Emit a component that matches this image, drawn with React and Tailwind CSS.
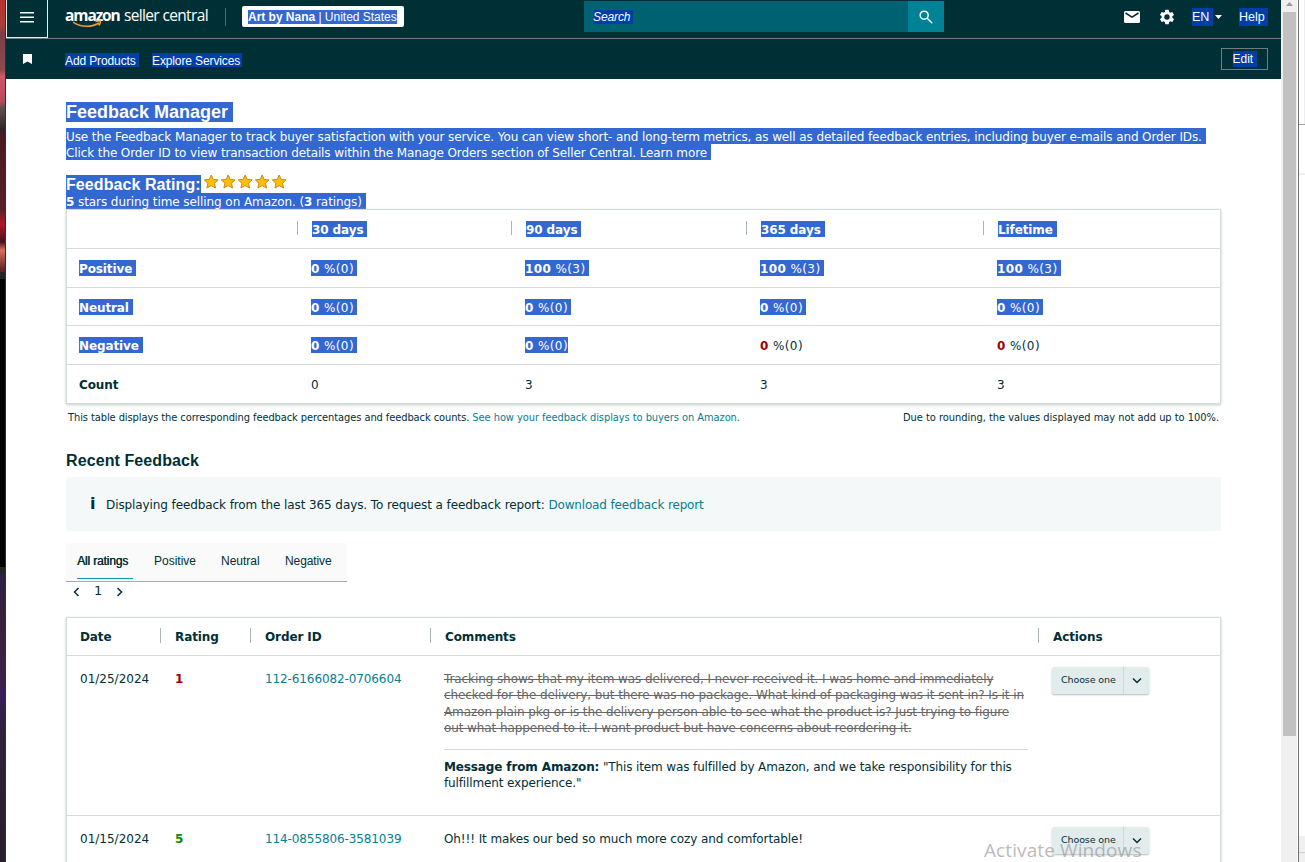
import React from "react";

const stats = [
  { label: "Positive", h: "h-[39px]", values: [[0, 0], [100, 3], [100, 3], [100, 3]], selected: 4 },
  { label: "Neutral", h: "h-[38px]", values: [[0, 0], [0, 0], [0, 0], [0, 0]], selected: 4 },
  { label: "Negative", h: "h-[39px]", values: [[0, 0], [0, 0], [0, 0], [0, 0]], selected: 2 },
];

function Mark({ children, className = "" }) {
  return (
    <span className={`inline-block h-4 bg-[#3367d1] leading-4 whitespace-nowrap text-white ${className}`}>
      {children}
    </span>
  );
}

function NavMark({ children, className = "" }) {
  return <span className={`inline-block bg-[#003eaa] whitespace-nowrap text-white ${className}`}>{children}</span>;
}

function Star() {
  return (
    <svg width="17" height="16" viewBox="0 0 17 16">
      <path
        d="M7.200 1l2 4.400 4.900.500-3.600 3.300 1 4.800-4.300-2.400L2.900 14l1-4.800L.300 5.900l4.900-.500z"
        fill="#fdc00a"
        stroke="#c98a12"
        strokeLinejoin="round"
      />
    </svg>
  );
}

function Chevron({ d, className }) {
  return (
    <svg className={className} width="10" height="10" viewBox="0 0 10 10" fill="none" stroke="#002f36" strokeWidth="1.5">
      <path d={d} />
    </svg>
  );
}

function ChooseOne() {
  return (
    <div className="flex h-[27px] w-[97px] rounded-xs bg-[#e3eced] text-[9.5px] shadow-[0_1px_2px_#b0bbbd]">
      <div className="flex w-[72px] items-center border-r border-[#cfd9da] pb-0.5 pl-[9px] whitespace-nowrap">Choose one</div>
      <div className="flex flex-1 items-center justify-center">
        <Chevron d="M1 2.500l4 4 4-4" />
      </div>
    </div>
  );
}

function TopBar() {
  return (
    <header className="bg-[#002f36] font-['Liberation_Sans',Arial,sans-serif] tracking-normal text-white">
      <div className="flex h-[39px] items-start border-b border-[#6f7d7f]">
        <div className="flex h-[38px] w-[42px] items-center justify-center border border-t-0 border-[#e8eeee] pb-[3px]">
          <svg width="14" height="12" viewBox="0 0 14 12" fill="#fff">
            <path d="M0 1h14v1.500H0zM0 5.500h14V7H0zM0 10h14v1.500H0z" />
          </svg>
        </div>
        <div className="relative ml-[17px] flex h-[29px] w-[160px] items-center font-['Open_Sans',sans-serif] text-[15.5px] whitespace-nowrap">
          <b className="w-[55px] tracking-[-1.1px]">amazon</b>
          <span className="ml-1 tracking-[-0.65px]">seller central</span>
          <svg className="absolute top-5 left-[8px]" width="30" height="8" viewBox="0 0 30 8" fill="none" stroke="#f29a2e" strokeWidth="1.5">
            <path d="M0 2C8 7.500 19 7.500 26 3M22.500 1.500c3-.700 5-.600 5 .100s-.600 2.500-1.600 4" />
          </svg>
        </div>
        <div className="mt-2 h-[18px] w-px bg-[#4d6b70]" />
        <div className="mt-[6px] ml-4 flex h-[21px] w-[162px] items-center rounded-xs bg-white pl-[6px] text-[12px]">
          <Mark className="h-[14px]! w-[149px] leading-[14px]! tracking-[-0.02px]">
            <b>Art by Nana</b> | United States
          </Mark>
        </div>
        <div className="mt-px ml-[180px] flex h-[31px] w-[360px] bg-[#006170]">
          <div className="flex-1 pt-[9px] pl-[9px] text-xs leading-[14px] italic">
            <NavMark className="w-[40px] tracking-[-0.1px]">Search</NavMark>
          </div>
          <div className="flex w-9 items-center justify-center bg-[#008296]">
            <svg width="14" height="14" viewBox="0 0 14 14" fill="none" stroke="#fff" strokeWidth="1.5">
              <circle cx="5.200" cy="5.200" r="4" />
              <path d="M8.200 8.200l5 5" />
            </svg>
          </div>
        </div>
        <svg className="mt-[11px] ml-[180px]" width="16" height="12" viewBox="0 0 16 12">
          <rect width="16" height="12" rx="1.500" fill="#fff" />
          <path d="M1.500 2L8 6.200 14.500 2" fill="none" stroke="#002f36" strokeWidth="1.500" />
        </svg>
        <svg className="mt-[8px] ml-[18px]" width="18" height="18" viewBox="0 0 24 24" fill="#fff">
          <path d="M19.140 12.940c.040-.300.060-.610.060-.940s-.020-.640-.070-.940l2.030-1.580a.49.49 0 0 0 .120-.610l-1.920-3.320a.488.488 0 0 0-.590-.220l-2.390.960a7 7 0 0 0-1.620-.940L14.400 2.810a.484.484 0 0 0-.480-.410h-3.840a.47.47 0 0 0-.470.410L9.250 5.350a7.300 7.300 0 0 0-1.620.940l-2.390-.960a.48.48 0 0 0-.590.220L2.740 8.870a.47.47 0 0 0 .120.610l2.030 1.580c-.050.300-.090.630-.090.940s.020.640.070.940l-2.030 1.580a.49.49 0 0 0-.120.610l1.920 3.320c.120.220.370.290.590.220l2.390-.960c.500.380 1.030.700 1.620.940l.360 2.540c.050.240.240.410.480.410h3.840c.240 0 .440-.170.470-.410l.360-2.540a7 7 0 0 0 1.620-.940l2.390.960c.220.080.470 0 .590-.220l1.920-3.320a.47.47 0 0 0-.120-.610zM12 15.600a3.600 3.600 0 1 1 0-7.200 3.600 3.600 0 0 1 0 7.200z" />
        </svg>
        <NavMark className="mt-2 ml-[16px] h-[18px] w-[21px] text-[12.5px] leading-[18px]">EN</NavMark>
        <svg className="mt-[15px] ml-[2px]" width="7" height="4" viewBox="0 0 7 4">
          <path d="M0 0h7L3.500 4z" fill="#fff" />
        </svg>
        <NavMark className="mt-2 ml-[17px] h-[18px] w-[29px] text-[12.5px] leading-[18px]">Help</NavMark>
      </div>
      <div className="flex h-10 text-xs">
        <svg className="mt-[15px] ml-[17px]" width="9" height="10" viewBox="0 0 9 10">
          <path d="M0 0h9v10L4.500 7.500 0 10z" fill="#fff" />
        </svg>
        <div className="mt-[14px] ml-[33px] flex gap-[13px] leading-4 tracking-[-0.12px]">
          <NavMark className="h-[14px] w-[74px]">Add Products</NavMark>
          <NavMark className="h-[14px] w-[90px]">Explore Services</NavMark>
        </div>
        <div className="mt-[9px] mr-[13px] ml-auto flex h-[22px] w-[47px] items-center justify-center border border-[#6f7d7f]">
          <NavMark className="w-6 leading-4">Edit</NavMark>
        </div>
      </div>
    </header>
  );
}

function SummaryTable() {
  return (
    <div className="w-[1155px] border border-[#d5dbdb] shadow-[0_1px_3px_#c3caca]">
      <div className="grid h-[38px] grid-cols-[230px_214px_235px_237px_1fr] items-center font-bold">
        <div />
        {["30 days", "90 days", "365 days", "Lifetime"].map((t) => (
          <div key={t} className="flex items-center">
            <i className="mb-0.5 h-[14px] w-px bg-[#aab7b8]" />
            <Mark className="ml-[14px] pr-1 leading-[18px]!">{t}</Mark>
          </div>
        ))}
      </div>
      {stats.map((row) => (
        <div
          key={row.label}
          className={`grid grid-cols-[230px_214px_235px_237px_1fr] items-center border-t border-[#d5dbdb] ${row.h}`}
        >
          <div className="flex pl-3">
            <Mark className="pr-1 font-bold leading-[18px]!">{row.label}</Mark>
          </div>
          {row.values.map(([pct, n], i) => (
            <div key={i} className="flex pl-[14px] tracking-[0.4px]">
              {i < row.selected ? (
                <Mark className={row.selected === 2 && i === 1 ? "leading-[18px]!" : "pr-[3px] leading-[18px]!"}>
                  <b>{pct}</b> %({n})
                </Mark>
              ) : (
                <span className="h-4 leading-[18px]">
                  <b className="text-[#a00000]">{pct}</b> %({n})
                </span>
              )}
            </div>
          ))}
        </div>
      ))}
      <div className="grid h-[39px] grid-cols-[230px_214px_235px_237px_1fr] items-center border-t border-[#d5dbdb] pt-0.5">
        <div className="pl-3 font-bold">Count</div>
        {[0, 3, 3, 3].map((n, i) => (
          <div key={i} className="pl-[14px]">{n}</div>
        ))}
      </div>
    </div>
  );
}

function FeedbackTable() {
  const cols = "grid grid-cols-[93px_90px_180px_608px_1fr]";
  return (
    <div className="mt-[18px] w-[1155px] border border-[#d5dbdb] shadow-[0_1px_3px_#c3caca]">
      <div className={`${cols} h-[37px] items-center font-bold`}>
        <div className="pl-[13px]">Date</div>
        {["Rating", "Order ID", "Comments", "Actions"].map((t) => (
          <div key={t} className="flex items-center">
            <i className="mb-0.5 h-[15px] w-px bg-[#aab7b8]" />
            <span className="ml-[14px]">{t}</span>
          </div>
        ))}
      </div>
      <div className={`${cols} h-[160px] border-t border-[#d5dbdb] pt-[15px]`}>
        <div className="pl-[13px] tracking-normal">01/25/2024</div>
        <div className="pl-[15px] font-bold text-[#a00000]">1</div>
        <div className="pl-[15px] text-[#077d92]">112-6166082-0706604</div>
        <div className="pr-[10px] pl-[14px]">
          <p className="border-b border-[#d5dbdb] pb-[12px] leading-[16.4px] tracking-[-0.09px] whitespace-nowrap text-[#666] line-through">
            Tracking shows that my item was delivered, I never received it. I was home and immediately
            <br />
            checked for the delivery, but there was no package. What kind of packaging was it sent in? Is it in
            <br />
            Amazon plain pkg or is the delivery person able to see what the product is? Just trying to figure
            <br />
            out what happened to it. I want product but have concerns about reordering it.
          </p>
          <p className="mt-[9px] tracking-[-0.13px] whitespace-nowrap">
            <b>Message from Amazon:</b> "This item was fulfilled by Amazon, and we take responsibility for this
            <br />
            fulfillment experience."
          </p>
        </div>
        <div className="-mt-[4px] pl-[14px]">
          <ChooseOne />
        </div>
      </div>
      <div className={`${cols} h-[160px] border-t border-[#d5dbdb] pt-[15px]`}>
        <div className="pl-[13px] tracking-normal">01/15/2024</div>
        <div className="pl-[15px] font-bold text-[#0a8a0a]">5</div>
        <div className="pl-[15px] text-[#077d92]">114-0855806-3581039</div>
        <div className="pl-[14px]">Oh!!! It makes our bed so much more cozy and comfortable!</div>
        <div className="-mt-[4px] pl-[14px]">
          <ChooseOne />
        </div>
      </div>
    </div>
  );
}

export default function App() {
  return (
    <div className="relative flex h-[862px] w-[1305px] overflow-hidden bg-white font-['DejaVu_Sans',Verdana,sans-serif] text-[12px] leading-4 tracking-[-0.105px] text-[#002f36]">
      <aside className="flex w-[6px] shrink-0 flex-col border-r border-[#3a2a2c]">
        <div className="h-[272px] bg-[linear-gradient(#b8322f_0,#a84038_26px,#7d4048_34px,#8a4a50_70px,#d4566a_76px,#b8485a_102px,#6a5052_106px,#2c2626_130px,#4a1a20_134px,#5a2028_210px,#b0182c_224px,#4a1018_242px,#d87060_250px,#5c2422_270px)]" />
        <div className="h-[7px] bg-[#242424]" />
        <div className="h-[288px] bg-black" />
        <div className="h-[6px] bg-[#242424]" />
        <div className="flex-1 bg-[linear-gradient(#2c2048_0,#35203c_40px,#3c2048_110px,#35205a_120px,#30203a_160px,#281d2b_280px)]" />
      </aside>
      <div className="w-[1275px] shrink-0">
        <TopBar />
        <main className="pl-[60px]">
          <h1 className="mt-[23px] inline-block h-5 w-[167px] bg-[#3367d1] font-['Liberation_Sans',Arial,sans-serif] text-[18px] leading-5 font-bold tracking-normal whitespace-nowrap text-white">
            Feedback Manager
          </h1>
          <div className="mt-[6px] flex flex-col items-start">
            <Mark className="pr-1 leading-[18px]!">
              Use the Feedback Manager to track buyer satisfaction with your service. You can view short- and long-term metrics, as well as detailed feedback entries, including buyer e-mails and Order IDs.
            </Mark>
            <Mark className="pr-1 leading-[18px]!">
              Click the Order ID to view transaction details within the Manage Orders section of Seller Central. Learn more
            </Mark>
          </div>
          <div className="mt-[15px] flex h-[18px]">
            <h2 className="h-[18px] w-[135px] bg-[#3367d1] font-['Liberation_Sans',Arial,sans-serif] text-[16px] leading-[19px] font-bold tracking-[0.08px] whitespace-nowrap text-white">
              Feedback Rating:
            </h2>
            <div className="-mt-px ml-[3px] flex">
              {[0, 1, 2, 3, 4].map((n) => (
                <Star key={n} />
              ))}
            </div>
          </div>
          <Mark className="block! w-[300px] leading-[18px]! tracking-[-0.08px]">
            <b>5</b> stars during time selling on Amazon. (<b>3</b> ratings)
          </Mark>
          <SummaryTable />
          <div className="mt-[6px] flex w-[1155px] justify-between px-0.5 text-[9.9px] whitespace-nowrap">
            <span className="tracking-[-0.075px]">
              This table displays the corresponding feedback percentages and feedback counts.{" "}
              <a className="tracking-[-0.06px] text-[#077d92]">See how your feedback displays to buyers on Amazon.</a>
            </span>
            <span className="tracking-[-0.02px]">Due to rounding, the values displayed may not add up to 100%.</span>
          </div>
          <h2 className="mt-[25px] font-['Liberation_Sans',Arial,sans-serif] text-[16px] leading-5 font-bold tracking-[0.1px]">
            Recent Feedback
          </h2>
          <div className="mt-[6px] flex h-[54px] w-[1155px] items-center bg-[#f4f8f9] pt-0.5 pl-6 text-[12px]">
            <b className="w-[16px] pb-0.5 text-[16px]">i</b>
            <span className="tracking-[-0.095px]">
              Displaying feedback from the last 365 days. To request a feedback report:{" "}
              <a className="tracking-[-0.16px] text-[#077d92]">Download feedback report</a>
            </span>
          </div>
          <nav className="mt-3 flex h-[39px] w-[281px] border-b border-[#aaa] bg-[#fafafa] pl-[11px] font-['Liberation_Sans',Arial,sans-serif] text-xs leading-[36px] tracking-normal whitespace-nowrap">
            <span className="h-9 w-14 border-b border-[#00a4b4] tracking-[-0.15px] [text-shadow:0.4px_0_0_#002f36]">All ratings</span>
            <span className="ml-[21px] w-[67px]">Positive</span>
            <span className="w-16">Neutral</span>
            <span className="tracking-[-0.1px]">Negative</span>
          </nav>
          <div className="flex h-[17px] items-center pl-[6px]">
            <Chevron className="mt-[3px]" d="M6.500 1l-4 4 4 4" />
            <span className="ml-[12px] text-[13px]">1</span>
            <Chevron className="mt-[3px] ml-[12px]" d="M3.500 1l4 4-4 4" />
          </div>
          <FeedbackTable />
        </main>
      </div>
      <div className="flex w-4 shrink-0 flex-col items-center bg-[#f0f0f0]">
        <svg className="mt-[2px] h-[10px]" width="7" height="10" viewBox="0 0 7 10">
          <path d="M0 4l3.500-4L7 4z" fill="#9b9b9b" />
        </svg>
        <div className="h-[724px] w-[13px] bg-[#c1c1c1]" />
      </div>
      <div className="flex flex-1 pl-px">
        <div className="w-px bg-[#707070]" />
        <div className="flex flex-1 flex-col">
          <div className="flex h-[125px] justify-end border-b border-[#a0a0a0]">
            <div className="w-px bg-[#ececf2]" />
          </div>
          <div className="h-[50px] border-b-2 border-[#efefef]" />
          <div className="h-[661px]" />
          <div className="h-[17px] border-b border-[#d0d0d0] bg-[#f0f0f0]" />
          <div className="flex-1 bg-[#f0f0f0]" />
        </div>
      </div>
      <div className="absolute top-[836px] left-[984px] font-['Open_Sans',sans-serif] text-[19px] leading-7 tracking-[0.1px] whitespace-nowrap text-[#9b9b9b]/70">
        Activate Windows
      </div>
    </div>
  );
}
